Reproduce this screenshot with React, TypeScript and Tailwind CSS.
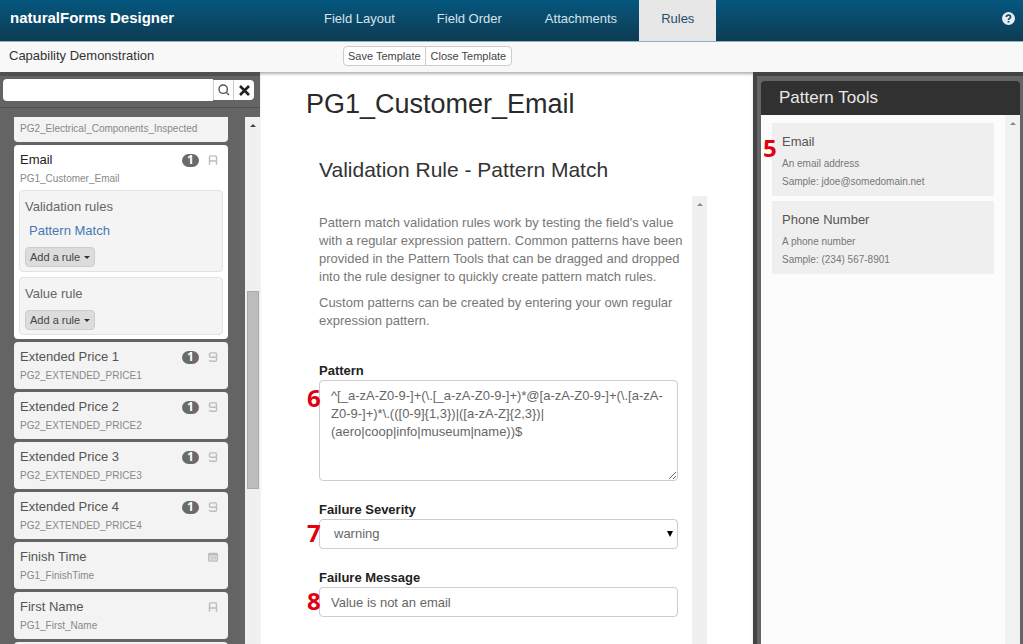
import type { ReactNode } from 'react'

type FieldKind = 'text' | 'number' | 'date'

const fields: { name: string; code: string; rules?: number; kind: FieldKind }[] = [
  { name: 'Extended Price 1', code: 'PG2_EXTENDED_PRICE1', rules: 1, kind: 'number' },
  { name: 'Extended Price 2', code: 'PG2_EXTENDED_PRICE2', rules: 1, kind: 'number' },
  { name: 'Extended Price 3', code: 'PG2_EXTENDED_PRICE3', rules: 1, kind: 'number' },
  { name: 'Extended Price 4', code: 'PG2_EXTENDED_PRICE4', rules: 1, kind: 'number' },
  { name: 'Finish Time', code: 'PG1_FinishTime', kind: 'date' },
  { name: 'First Name', code: 'PG1_First_Name', kind: 'text' },
]

const patterns = [
  { name: 'Email', about: 'An email address', sample: 'jdoe@somedomain.net' },
  { name: 'Phone Number', about: 'A phone number', sample: '(234) 567-8901' },
]

const emailPattern =
  '^[_a-zA-Z0-9-]+(\\.[_a-zA-Z0-9-]+)*@[a-zA-Z0-9-]+(\\.[a-zA-Z0-9-]+)*\\.(([0-9]{1,3})|([a-zA-Z]{2,3})|(aero|coop|info|museum|name))$'

function KindIcon({ kind }: { kind: FieldKind }) {
  return (
    <svg width="10" height="10" viewBox="0 0 10 10" fill="none" stroke="#bdbdbd" strokeWidth="1.4">
      {kind === 'text' && <path d="M1.5 9.8V2.3Q1.5 .9 2.9 .9H7.1Q8.5 .9 8.5 2.3V9.8M1.5 6H8.5" />}
      {kind === 'number' && (
        <path d="M8.5 5.2H2.9Q1.5 5.2 1.5 4V2.1Q1.5 .9 2.9 .9H7.1Q8.5 .9 8.5 2.1V8Q8.5 9.2 7.1 9.2H2.9Q1.5 9.2 1.5 8" />
      )}
      {kind === 'date' && (
        <>
          <rect x=".6" y="1.4" width="8.8" height="7.8" rx="1" strokeWidth="1.2" fill="#dedede" />
          <path d="M.6 2.4H9.4" strokeWidth="2" />
          <path d="M2.8 5H4.4L3.8 7.6M5.8 5H7.4L6.8 7.6" strokeWidth=".9" />
        </>
      )}
    </svg>
  )
}

function FieldHead({ name, code, rules, kind }: { name: string; code: string; rules?: number; kind: FieldKind }) {
  return (
    <>
      <div className="flex h-5 items-center">
        <span className="flex-1 text-[13px]">{name}</span>
        {rules && (
          <span className="mr-[9px] flex h-[13px] w-[17px] items-center justify-center rounded-full bg-[#6a6a6a] font-[family-name:Open_Sans,Noto_Sans,sans-serif] text-xs font-bold text-white">
            {rules}
          </span>
        )}
        <KindIcon kind={kind} />
      </div>
      <p className="text-[10px] leading-[18px] text-[#888]">{code}</p>
    </>
  )
}

function RuleBox({ title, children }: { title: string; children?: ReactNode }) {
  return (
    <div className="rounded-sm border border-[#e2e2e2] bg-[#f4f4f4] px-[5px] pt-2 pb-1 text-[#666]">
      <h4 className="text-[13px] leading-4">{title}</h4>
      {children}
      <button className="mt-2 flex h-5 items-center gap-1 rounded-sm border border-[#ccc] bg-[#dcdcdc] px-1 text-[11px] text-[#444]">
        Add a rule
        <span className="border-x-[3px] border-t-[3px] border-x-transparent border-t-[#333]" />
      </button>
    </div>
  )
}

function ScrollArrow({ className }: { className: string }) {
  return <span className={`border-x-[3px] border-b-[3px] border-x-transparent ${className}`} />
}

// red step number that hangs over the left edge of what it explains
function Step({ n, className }: { n: number; className: string }) {
  return (
    <span
      className={`pointer-events-none absolute font-[family-name:Open_Sans,Noto_Sans,sans-serif] text-2xl leading-6 font-bold text-[#e0000f] ${className}`}
    >
      {n}
    </span>
  )
}

function Header() {
  return (
    <header className="grid h-[42px] shrink-0 grid-cols-[303px_1fr_auto] border-b border-[#8fb0bf] bg-linear-to-b from-[#04577f] to-[#0d3b53] text-[13px]">
      <h1 className="self-center pb-1 pl-[10px] text-[15px] font-bold text-white">naturalForms Designer</h1>
      <nav className="flex whitespace-nowrap text-[#d5e3ea]">
        <a href="#layout" className="flex items-center px-[21px] pb-1">Field Layout</a>
        <a href="#order" className="flex items-center px-[21px] pb-1">Field Order</a>
        <a href="#attachments" className="flex items-center px-[22px] pb-1">Attachments</a>
        <a href="#rules" className="flex items-center bg-[#e7e7e7] px-[22px] pb-1 text-[#234f66]">Rules</a>
      </nav>
      <button aria-label="Help" className="mr-2 mb-1 self-center justify-self-end">
        <svg width="13" height="13" viewBox="0 0 13 13">
          <circle cx="6.5" cy="6.5" r="6.5" fill="#e8eef1" />
          <path d="M4.4 5Q4.4 3.2 6.5 3.2T8.6 5Q8.6 6 7.5 6.5Q6.5 7 6.5 8" fill="none" stroke="#174d68" strokeWidth="1.7" />
          <rect x="5.6" y="8.9" width="1.8" height="1.7" fill="#174d68" />
        </svg>
      </button>
    </header>
  )
}

function Sidebar() {
  return (
    <aside className="flex w-[260px] shrink-0 flex-col border-t-4 border-[#505050] bg-[#646464]">
      <form className="flex h-8 shrink-0 items-center border-b border-[#505050] pb-[3px] pl-[3px]">
        <input aria-label="Search fields" className="h-[22px] w-[210px] rounded-l-sm bg-white px-2 text-[13px]" />
        <button type="button" aria-label="Search" className="flex h-5 w-[21px] items-center justify-center border-x border-[#ccc] bg-white">
          <svg width="12" height="12" viewBox="0 0 12 12" fill="none" stroke="#555" strokeWidth="1.4">
            <circle cx="5.2" cy="5.2" r="4.2" />
            <path d="M8.2 8.2L11 11" />
          </svg>
        </button>
        <button type="button" aria-label="Clear" className="flex h-5 w-5 items-center justify-center rounded-r-sm bg-white">
          <svg width="11" height="11" viewBox="0 0 11 11" stroke="#222" strokeWidth="2.6">
            <path d="M1 1L10 10M10 1L1 10" />
          </svg>
        </button>
      </form>
      <div className="mt-[9px] flex min-h-0 flex-1">
        <div className="ml-[14px] flex w-[214px] flex-col gap-[3px] overflow-hidden text-[#555]">
          <div className="h-[25px] shrink-0 rounded-b-sm bg-[#f3f3f3] px-[6px] pt-[3px]">
            <p className="text-[10px] leading-[18px] text-[#888]">PG2_Electrical_Components_Inspected</p>
          </div>
          <div className="shrink-0 rounded-sm bg-white px-[5px] pt-[5px] pb-1">
            <div className="mb-0.5 pr-[5px] pl-px text-[#222]">
              <FieldHead name="Email" code="PG1_Customer_Email" rules={1} kind="text" />
            </div>
            <div className="flex flex-col gap-[5px]">
              <RuleBox title="Validation rules">
                <a href="#pattern" className="mt-2 ml-1 block text-[13px] leading-4 text-[#4479b5]">Pattern Match</a>
              </RuleBox>
              <RuleBox title="Value rule" />
            </div>
          </div>
          {fields.map((field) => (
            <div key={field.code} className="h-[47px] shrink-0 rounded-sm bg-[#f3f3f3] pt-[5px] pr-[10px] pl-[6px]">
              <FieldHead {...field} />
            </div>
          ))}
          <div className="h-[47px] shrink-0 rounded-sm bg-[#f3f3f3]" />
        </div>
        <div className="ml-auto flex w-[15px] flex-col items-center bg-[#f0f0f0]">
          <ScrollArrow className="mt-[7px] border-b-[#444]" />
          <div className="mt-[164px] h-[198px] w-3 border border-[#a8a8a8] bg-[#bcbcbc]" />
        </div>
      </div>
    </aside>
  )
}

function RuleEditor() {
  return (
    <main className="flex min-w-0 flex-1 flex-col bg-white pl-[46px] shadow-[inset_0_3px_3px_-1px_#b0b0b0]">
      <h2 className="mt-4 text-[27px] leading-8 text-[#2a2a2a]">PG1_Customer_Email</h2>
      <section className="mt-7 mr-[46px] flex min-h-0 flex-1 flex-col pl-[13px]">
        <h3 className="mt-2 text-[21px] leading-7 text-[#333]">Validation Rule - Pattern Match</h3>
        <div className="mt-3 flex min-h-0 flex-1">
          <div className="min-w-0 flex-1 pt-[18px] text-[13px] leading-[18px] text-[#777]">
            <div className="pr-1">
              <p>
                Pattern match validation rules work by testing the field's value with a regular expression pattern.
                Common patterns have been provided in the Pattern Tools that can be dragged and dropped into the rule
                designer to quickly create pattern match rules.
              </p>
              <p className="mt-2">Custom patterns can be created by entering your own regular expression pattern.</p>
            </div>
            <div className="relative mt-8 mr-[14px]">
              <label htmlFor="pattern" className="block font-bold text-[#222]">Pattern</label>
              <textarea
                id="pattern"
                defaultValue={emailPattern}
                className="block h-[101px] w-full rounded-sm border border-[#ccc] px-[11px] py-[6px] text-[#666]"
              />
              <Step n={6} className="top-6 -left-3" />
            </div>
            <div className="relative mt-5 mr-[14px]">
              <label htmlFor="severity" className="block font-bold text-[#222]">Failure Severity</label>
              <div className="relative">
                <select
                  id="severity"
                  className="block h-[30px] w-full appearance-none rounded-sm border border-[#ccc] bg-white px-[14px] text-[#666]"
                >
                  <option>warning</option>
                </select>
                <span className="pointer-events-none absolute top-3 right-[5px] border-x-[3px] border-t-[6px] border-x-transparent border-t-black" />
              </div>
              <Step n={7} className="top-5 -left-3" />
            </div>
            <div className="relative mt-5 mr-[14px]">
              <label htmlFor="message" className="block font-bold text-[#222]">Failure Message</label>
              <input
                id="message"
                defaultValue="Value is not an email"
                className="block h-[30px] w-full rounded-sm border border-[#ccc] px-[11px] text-[#666]"
              />
              <Step n={8} className="top-5 -left-3" />
            </div>
          </div>
          <div className="flex w-[15px] shrink-0 flex-col items-center bg-[#f0f0f0]">
            <ScrollArrow className="mt-[7px] border-b-[#888]" />
          </div>
        </div>
      </section>
    </main>
  )
}

function PatternTools() {
  return (
    <aside className="flex w-[270px] shrink-0 border-t-4 border-l-4 border-[#434343] bg-[#646464] pt-[5px] pr-[3px] pl-1">
      <div className="relative flex flex-1 flex-col">
        <h2 className="h-[34px] rounded-t bg-[#313131] pl-[18px] text-[17px] leading-[34px] text-[#e8e8e8]">Pattern Tools</h2>
        <div className="flex flex-1 bg-[#fcfcfc]">
          <ul className="flex-1 space-y-[5px] px-[11px] pt-2">
            {patterns.map((p) => (
              <li key={p.name} className="h-[73px] bg-[#efefef] px-[10px] pt-[10px] text-[10px] leading-[18px] text-[#777]">
                <h3 className="text-[13px] leading-[18px] text-[#555]">{p.name}</h3>
                <p className="mt-1">{p.about}</p>
                <p>Sample: {p.sample}</p>
              </li>
            ))}
          </ul>
          <div className="flex w-[15px] flex-col items-center bg-[#f2f2f2]">
            <ScrollArrow className="mt-[7px] border-b-[#888]" />
          </div>
        </div>
        <Step n={5} className="top-[55px] left-0.5" />
      </div>
    </aside>
  )
}

export default function App() {
  return (
    <div className="flex h-screen flex-col overflow-hidden font-['Liberation_Sans',Arial,sans-serif]">
      <Header />
      <div className="flex h-[30px] shrink-0 items-center bg-[#f8f8f8] pb-0.5">
        <span className="w-1/3 pl-[9px] text-[13px] text-[#333]">Capability Demonstration</span>
        <div className="ml-0.5 flex h-5 rounded-sm border border-[#ccc] bg-white text-[11px] text-[#444]">
          <button className="border-r border-[#ccc] px-1">Save Template</button>
          <button className="px-[5px]">Close Template</button>
        </div>
      </div>
      <div className="flex min-h-0 flex-1">
        <Sidebar />
        <RuleEditor />
        <PatternTools />
      </div>
    </div>
  )
}
